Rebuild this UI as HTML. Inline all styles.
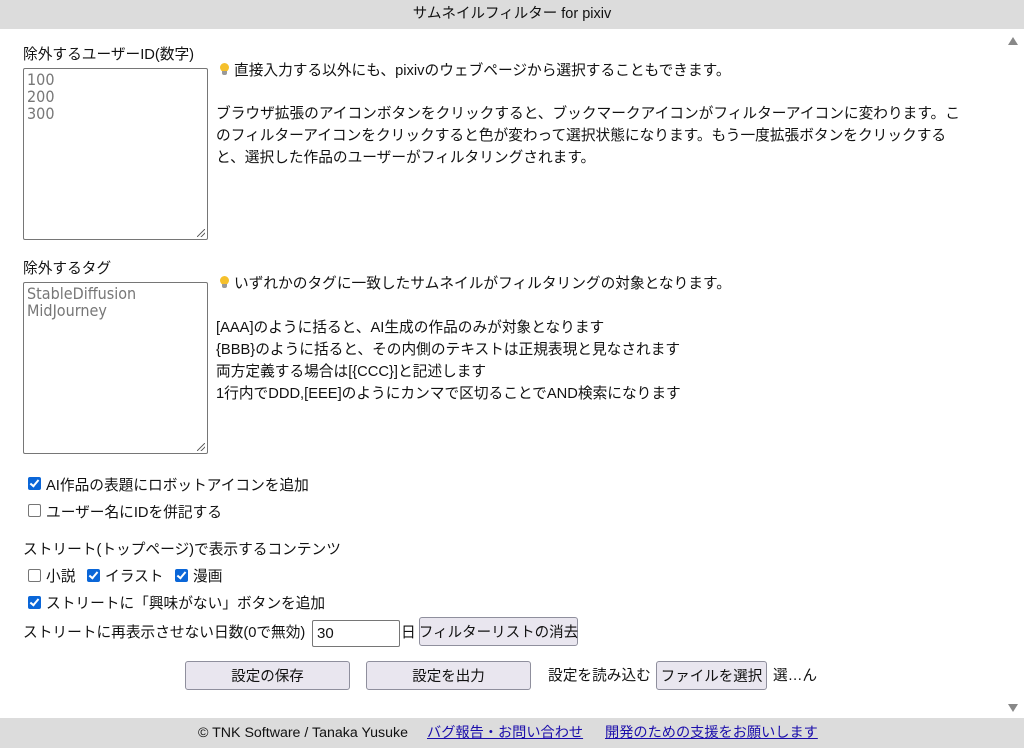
<!DOCTYPE html>
<html><head><meta charset="utf-8"><style>
*{box-sizing:border-box;margin:0;padding:0}
body{width:1024px;height:748px;overflow:hidden;background:#fff;position:relative;font-family:"Liberation Sans","Noto Sans CJK JP",sans-serif;font-size:14.7px;color:#111}
.a{position:absolute;white-space:nowrap;line-height:20px}
.hdr{position:absolute;left:0;top:0;width:1024px;height:29px;background:#dcdcdc;text-align:center;line-height:29px;font-size:14.5px}
.ftr{position:absolute;left:0;top:718px;width:1024px;height:30px;background:#dcdcdc;line-height:30px;font-size:14.2px}
.ftr a{color:#1a0dab;text-decoration:underline}
.ta{position:absolute;border:1px solid #767676;border-radius:2px;background:#fff;font-family:"DejaVu Sans Condensed","Liberation Sans Narrow","Liberation Sans",sans-serif;font-size:16px;line-height:17px;color:#777;padding:2px 3px;white-space:pre}
.grip{position:absolute;right:2px;bottom:2px;width:8px;height:8px;background:linear-gradient(135deg,transparent 45%,#666 45%,#666 55%,transparent 55%,transparent 70%,#666 70%,#666 80%,transparent 80%)}
.cb{position:absolute;width:13px;height:13px;border-radius:2px}
.cb.on{background:#0a66d8}
.cb.on:after{content:"";position:absolute;left:4px;top:1px;width:3px;height:7px;border:solid #fff;border-width:0 2px 2px 0;transform:rotate(40deg)}
.cb.off{border:1px solid #767676;background:#fff}
.btn{position:absolute;background:#e9e6ef;border:1px solid #8f8f9d;border-radius:3px;display:flex;align-items:center;justify-content:center;font-size:14.5px;white-space:nowrap}
.bulb{display:inline-block;width:9px;height:13px;position:relative;margin-right:5px;vertical-align:-1px}
.bulb:before{content:"";position:absolute;left:0;top:0;width:9px;height:9px;border-radius:50%;background:#f5c02c}
.bulb:after{content:"";position:absolute;left:2px;top:8px;width:5px;height:4px;background:#999;border-radius:0 0 2px 2px}
.tri{position:absolute;left:1008px;width:0;height:0;border-left:5px solid transparent;border-right:5px solid transparent}
</style></head><body>
<div class="hdr">サムネイルフィルター for pixiv</div>
<div class="tri" style="top:37px;border-bottom:8px solid #888"></div>
<div class="tri" style="top:704px;border-top:8px solid #888"></div>

<div class="a" style="left:23px;top:45px">除外するユーザーID(数字)</div>
<div class="ta" style="left:23px;top:68px;width:185px;height:172px">100
200
300<div class="grip"></div></div>
<div class="a" style="left:220px;top:61px"><span class="bulb"></span>直接入力する以外にも、pixivのウェブページから選択することもできます。</div>
<div class="a" style="left:216px;top:103px;line-height:22px;white-space:normal;width:752px">ブラウザ拡張のアイコンボタンをクリックすると、ブックマークアイコンがフィルターアイコンに変わります。このフィルターアイコンをクリックすると色が変わって選択状態になります。もう一度拡張ボタンをクリックすると、選択した作品のユーザーがフィルタリングされます。</div>

<div class="a" style="left:23px;top:259px">除外するタグ</div>
<div class="ta" style="left:23px;top:282px;width:185px;height:172px">StableDiffusion
MidJourney<div class="grip"></div></div>
<div class="a" style="left:220px;top:274px"><span class="bulb"></span>いずれかのタグに一致したサムネイルがフィルタリングの対象となります。</div>
<div class="a" style="left:216px;top:317px;line-height:22px">[AAA]のように括ると、AI生成の作品のみが対象となります<br>{BBB}のように括ると、その内側のテキストは正規表現と見なされます<br>両方定義する場合は[{CCC}]と記述します<br>1行内でDDD,[EEE]のようにカンマで区切ることでAND検索になります</div>

<div class="cb on" style="left:28px;top:477px"></div><div class="a" style="left:46px;top:476px">AI作品の表題にロボットアイコンを追加</div>
<div class="cb off" style="left:28px;top:504px"></div><div class="a" style="left:46px;top:503px">ユーザー名にIDを併記する</div>

<div class="a" style="left:23px;top:540px">ストリート(トップページ)で表示するコンテンツ</div>
<div class="cb off" style="left:28px;top:569px"></div><div class="a" style="left:46px;top:567px">小説</div>
<div class="cb on" style="left:87px;top:569px"></div><div class="a" style="left:105px;top:567px">イラスト</div>
<div class="cb on" style="left:175px;top:569px"></div><div class="a" style="left:193px;top:567px">漫画</div>
<div class="cb on" style="left:28px;top:596px"></div><div class="a" style="left:46px;top:594px">ストリートに「興味がない」ボタンを追加</div>
<div class="a" style="left:23px;top:623px">ストリートに再表示させない日数(0で無効)</div>
<div style="position:absolute;left:312px;top:620px;width:88px;height:27px;border:1px solid #767676;border-radius:2px;padding-left:4px;line-height:25px;font-size:15px">30</div>
<div class="a" style="left:401px;top:623px">日</div>
<div class="btn" style="left:419px;top:617px;width:159px;height:29px">フィルターリストの消去</div>

<div class="btn" style="left:185px;top:661px;width:165px;height:29px">設定の保存</div>
<div class="btn" style="left:366px;top:661px;width:165px;height:29px">設定を出力</div>
<div class="a" style="left:548px;top:666px">設定を読み込む</div>
<div class="btn" style="left:656px;top:661px;width:111px;height:29px">ファイルを選択</div>
<div class="a" style="left:773px;top:666px">選…ん</div>

<div class="ftr"><span style="position:absolute;left:198px">© TNK Software / Tanaka Yusuke</span><a style="position:absolute;left:427px">バグ報告・お問い合わせ</a><a style="position:absolute;left:605px">開発のための支援をお願いします</a></div>
</body></html>
